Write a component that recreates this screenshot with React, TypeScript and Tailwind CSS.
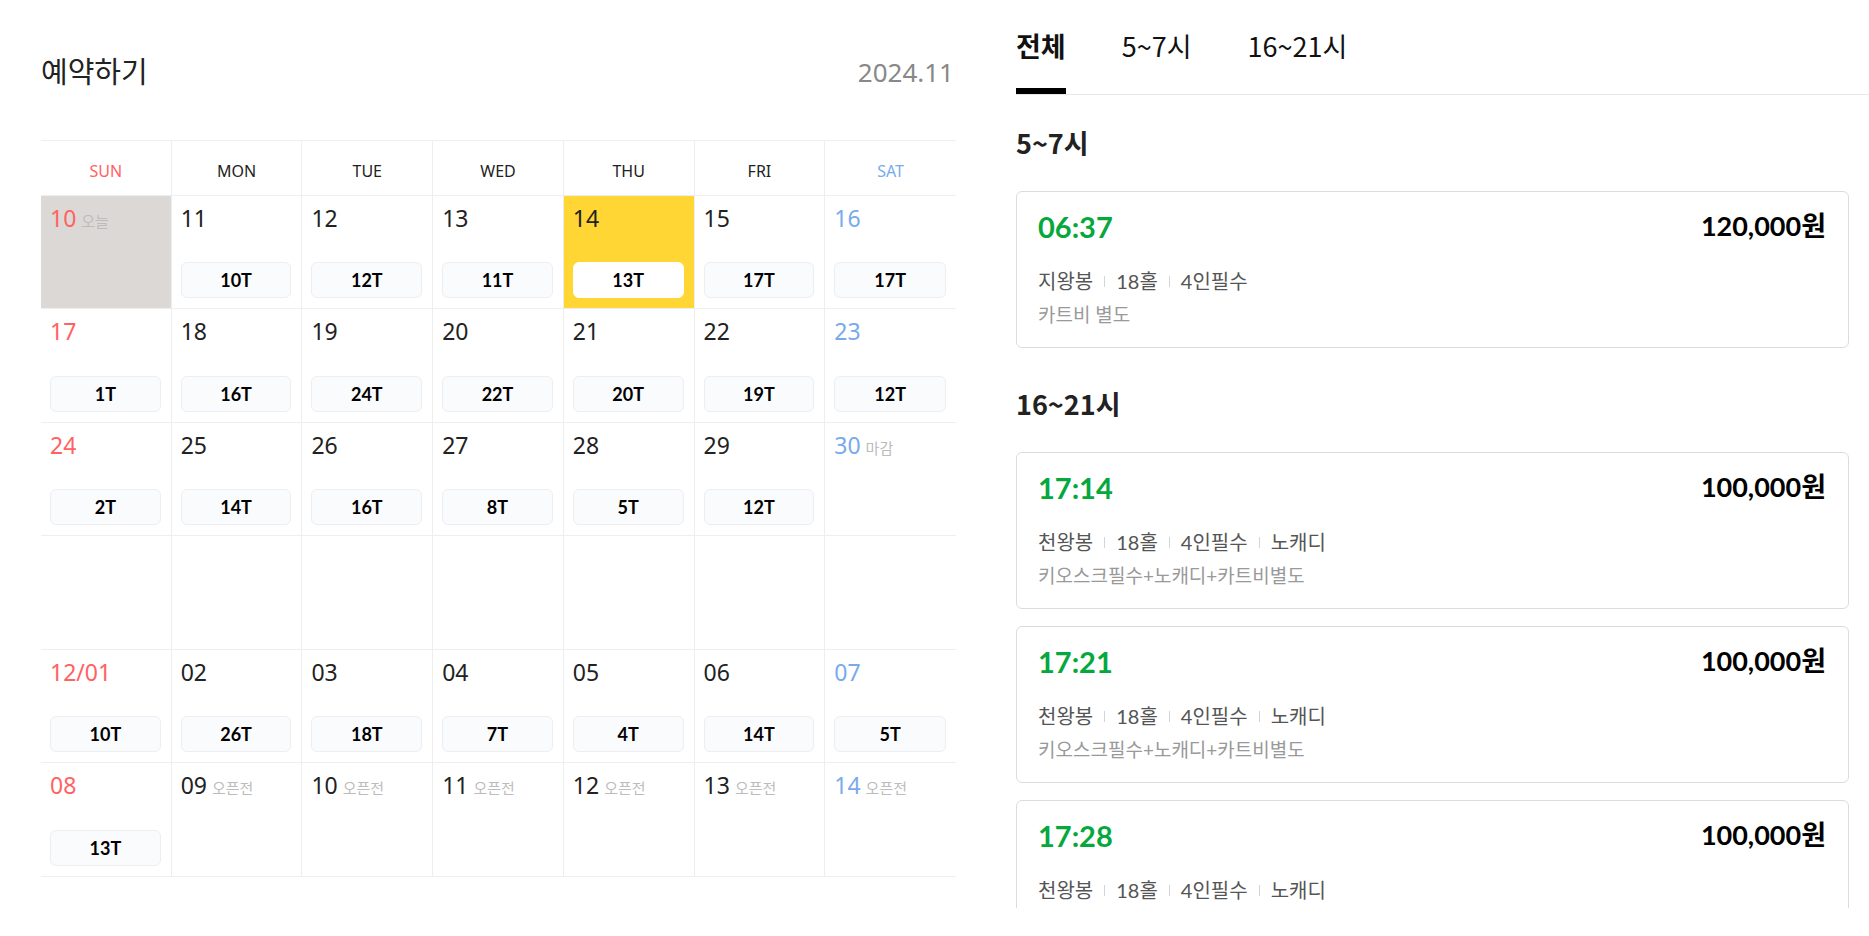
import React from 'react';

type Day = {
  d: string;
  slot?: string;
  note?: string;
  today?: boolean;
  selected?: boolean;
} | null;

const DAYS = ['SUN', 'MON', 'TUE', 'WED', 'THU', 'FRI', 'SAT'];

const WEEKS: Day[][] = [
  [
    { d: '10', note: '오늘', today: true },
    { d: '11', slot: '10T' },
    { d: '12', slot: '12T' },
    { d: '13', slot: '11T' },
    { d: '14', slot: '13T', selected: true },
    { d: '15', slot: '17T' },
    { d: '16', slot: '17T' },
  ],
  [
    { d: '17', slot: '1T' },
    { d: '18', slot: '16T' },
    { d: '19', slot: '24T' },
    { d: '20', slot: '22T' },
    { d: '21', slot: '20T' },
    { d: '22', slot: '19T' },
    { d: '23', slot: '12T' },
  ],
  [
    { d: '24', slot: '2T' },
    { d: '25', slot: '14T' },
    { d: '26', slot: '16T' },
    { d: '27', slot: '8T' },
    { d: '28', slot: '5T' },
    { d: '29', slot: '12T' },
    { d: '30', note: '마감' },
  ],
  [null, null, null, null, null, null, null],
  [
    { d: '12/01', slot: '10T' },
    { d: '02', slot: '26T' },
    { d: '03', slot: '18T' },
    { d: '04', slot: '7T' },
    { d: '05', slot: '4T' },
    { d: '06', slot: '14T' },
    { d: '07', slot: '5T' },
  ],
  [
    { d: '08', slot: '13T' },
    { d: '09', note: '오픈전' },
    { d: '10', note: '오픈전' },
    { d: '11', note: '오픈전' },
    { d: '12', note: '오픈전' },
    { d: '13', note: '오픈전' },
    { d: '14', note: '오픈전' },
  ],
];

type TeeTime = { time: string; price: string; info: string[]; note: string };

const SECTIONS: { title: string; items: TeeTime[] }[] = [
  {
    title: '5~7시',
    items: [{ time: '06:37', price: '120,000원', info: ['지왕봉', '18홀', '4인필수'], note: '카트비 별도' }],
  },
  {
    title: '16~21시',
    items: [
      { time: '17:14', price: '100,000원', info: ['천왕봉', '18홀', '4인필수', '노캐디'], note: '키오스크필수+노캐디+카트비별도' },
      { time: '17:21', price: '100,000원', info: ['천왕봉', '18홀', '4인필수', '노캐디'], note: '키오스크필수+노캐디+카트비별도' },
      { time: '17:28', price: '100,000원', info: ['천왕봉', '18홀', '4인필수', '노캐디'], note: '키오스크필수+노캐디+카트비별도' },
    ],
  },
];

const dayColor = (col: number) =>
  col === 0 ? 'text-[#ff6262]' : col === 6 ? 'text-[#78aaec]' : 'text-[#222222]';

const CalendarCell: React.FC<{ day: Day; col: number; tall: boolean }> = ({ day, col, tall }) => {
  const bg = day?.today ? 'bg-[#dcd8d6]' : day?.selected ? 'bg-[#ffd633]' : 'bg-white';
  return (
    <div
      className={`${tall ? 'h-[113px]' : 'h-[112px]'} flex flex-col justify-between pt-[11px] pb-[10px] pl-[9px] pr-[10px] ${
        col < 6 ? 'border-r border-[#eeeeee]' : ''
      } ${bg}`}
    >
      {day ? (
        <div className="flex items-baseline">
          <span className={`text-[23px] leading-none ${dayColor(col)}`}>{day.d}</span>
          {day.note && (
            <span className="ml-[5px] text-[15px] leading-none text-[#bcbcbc]">{day.note}</span>
          )}
        </div>
      ) : (
        <div />
      )}
      {day?.slot && (
        <div
          className={`h-[36px] rounded-[6px] border flex items-center justify-center text-[18px] font-bold text-black [font-family:Lato,'Noto_Sans_CJK_KR',sans-serif] ${
            day.selected ? 'bg-white border-white' : 'bg-[#fafbfd] border-[#eceef2]'
          }`}
        >
          {day.slot}
        </div>
      )}
    </div>
  );
};

const Separator = () => <span className="inline-block w-px h-[11px] bg-[#d4d4d4] mx-[11px]" />;

export default function App() {
  return (
    <div className="min-h-screen bg-white flex pl-[41px] [font-family:'Noto_Sans','Noto_Sans_CJK_KR',sans-serif]">
      {/* 달력 */}
      <div className="w-[915px] shrink-0">
        <div className="pt-[55px] flex items-end justify-between h-[85px]">
          <h1 className="text-[29px] leading-none text-[#222222] [font-family:'Noto_Sans_CJK_KR',sans-serif]">예약하기</h1>
          <span className="text-[26px] leading-none text-[#888888] pr-[2px]">2024.11</span>
        </div>

        <div className="mt-[55px] border-t border-[#eeeeee]">
          <div className="grid grid-cols-7 border-b border-[#eeeeee]">
            {DAYS.map((label, i) => (
              <div
                key={label}
                className={`h-[54px] flex items-center justify-center pt-[5px] text-[16px] ${
                  i < 6 ? 'border-r border-[#eeeeee]' : ''
                } ${i === 0 ? 'text-[#ff6262]' : i === 6 ? 'text-[#78aaec]' : 'text-[#222222]'}`}
              >
                {label}
              </div>
            ))}
          </div>
          {WEEKS.map((week, w) => (
            <div key={w} className="grid grid-cols-7 border-b border-[#eeeeee]">
              {week.map((day, i) => (
                <CalendarCell key={i} day={day} col={i} tall={w % 2 === 1} />
              ))}
            </div>
          ))}
        </div>
      </div>

      {/* 시간 목록 */}
      <div className="flex-1 ml-[60px] h-[908px] overflow-hidden [font-family:Lato,'Noto_Sans_CJK_KR',sans-serif]">
        <div className="flex gap-[56px] border-b border-[#e8e8e8] [font-family:'Noto_Sans_CJK_KR',sans-serif]">
          {['전체', '5~7시', '16~21시'].map((tab, i) => (
            <div
              key={tab}
              className={`pt-[32px] pb-[29px] border-b-[6px] text-[27px] leading-none text-[#111111] ${
                i === 0 ? 'border-black font-bold' : 'border-transparent'
              }`}
            >
              {tab}
            </div>
          ))}
        </div>

        <div className="pr-[20px]">
          {SECTIONS.map((section, s) => (
            <div key={section.title} className={s === 0 ? 'mt-[34px]' : 'mt-[42px]'}>
              <h2 className="text-[27px] leading-none font-bold text-[#222222] mb-[35px] [font-family:'Noto_Sans_CJK_KR',sans-serif]">
                {section.title}
              </h2>
              <div className="flex flex-col gap-[17px]">
                {section.items.map((item) => (
                  <div
                    key={item.time}
                    className="border border-[#dcdcdc] rounded-[6px] pt-[20px] pb-[23px] pl-[21px] pr-[22px]"
                  >
                    <div className="flex justify-between items-start">
                      <span className="text-[29px] leading-none font-bold text-[#05a83c]">{item.time}</span>
                      <span className="text-[27px] leading-none font-bold text-black">{item.price}</span>
                    </div>
                    <div className="mt-[30px] flex items-center text-[20px] leading-[20px] text-[#555555]">
                      {item.info.map((t, k) => (
                        <React.Fragment key={k}>
                          {k > 0 && <Separator />}
                          <span>{t}</span>
                        </React.Fragment>
                      ))}
                    </div>
                    <div className="mt-[14px] text-[19px] leading-[19px] text-[#999999]">{item.note}</div>
                  </div>
                ))}
              </div>
            </div>
          ))}
        </div>
      </div>
    </div>
  );
}
